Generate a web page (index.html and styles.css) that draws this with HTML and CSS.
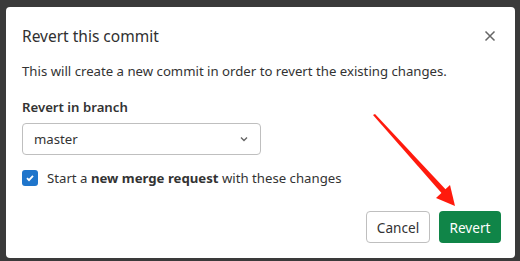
FILE: index.html
```html
<!DOCTYPE html>
<html>
<head>
<title>Revert this commit</title>
<link rel="stylesheet" href="styles.css">
</head>
<body>
<div class="backdrop">
    <div class="modal">
        <div class="modal-header">
            <h4 class="modal-title">Revert this commit</h4>
            <span class="close">
                <svg width="16" height="16" viewBox="0 0 16 16"><path d="M3.5 3.5l9 9M12.5 3.5l-9 9" stroke="#666" stroke-width="1.5" fill="none"/></svg>
            </span>
        </div>
        <div class="modal-body">
            <p class="intro">This will create a new commit in order to revert the existing changes.</p>
            <div class="label">Revert in branch</div>
            <div class="select">
                <span>master</span>
                <svg width="12" height="12" viewBox="0 0 12 12"><path d="M3 4.5l3 3 3-3" stroke="#666" stroke-width="1.4" fill="none"/></svg>
            </div>
            <div class="check-row">
                <span class="checkbox">
                    <svg width="10" height="10" viewBox="0 0 10 10"><path d="M2 5.2l2 2 4-4.4" stroke="#fff" stroke-width="1.8" fill="none"/></svg>
                </span>
                <span>Start a <b>new merge request</b> with these changes</span>
            </div>
        </div>
        <div class="modal-footer">
            <div class="btn btn-cancel">Cancel</div>
            <div class="btn btn-revert">Revert</div>
        </div>
    </div>
    <svg class="arrow" width="520" height="261" viewBox="0 0 520 261">
        <polygon points="373,115 375,114 449,193 445,197" fill="#ff1a0d"/>
        <polygon points="455,206 436,198 450,185" fill="#ff1a0d"/>
    </svg>
</div>
</body>
</html>
```

FILE: styles.css
```css
html, body {
    margin: 0;
    width: 100%;
    height: 100%;
    background-color: #3a3a3a;
    font-family: "Segoe UI", "Noto Sans", sans-serif;
    color: #333;
}
.backdrop {
    position: relative;
    padding: 7px 5px 3px 6px;
}
.modal {
    width: 509px;
    height: 251px;
    background-color: #fff;
    border-radius: 4px;
    display: flex;
    flex-direction: column;
}
.modal-header {
    display: flex;
    align-items: center;
    justify-content: space-between;
    padding: 18px 17px 14px 16px;
}
.modal-title {
    margin: 0;
    font-size: 15.5px;
    line-height: 22px;
    font-weight: 400;
    color: #303030;
}
.close {
    display: flex;
}
.modal-body {
    padding: 0 16px;
    font-size: 13.2px;
    line-height: 20px;
}
.intro {
    margin: 0 0 16px;
}
.label {
    font-weight: 600;
    margin-bottom: 6px;
}
.select {
    width: 216px;
    height: 30px;
    border: 1px solid #bfbfbf;
    border-radius: 4px;
    display: flex;
    align-items: center;
    justify-content: space-between;
    padding: 0 10px 0 11px;
}
.check-row {
    display: flex;
    align-items: center;
    gap: 9px;
    margin-top: 13px;
}
.checkbox {
    width: 16px;
    height: 16px;
    border-radius: 3px;
    background-color: #1f75cb;
    display: flex;
    align-items: center;
    justify-content: center;
}
.modal-footer {
    margin-top: auto;
    display: flex;
    justify-content: flex-end;
    gap: 9px;
    padding: 0 14px 15px;
}
.btn {
    height: 32px;
    box-sizing: border-box;
    border-radius: 4px;
    font-size: 13.6px;
    display: flex;
    align-items: center;
    justify-content: center;
}
.btn-cancel {
    width: 64px;
    border: 1px solid #bfbfbf;
    color: #333;
}
.btn-revert {
    width: 62px;
    background-color: #108548;
    color: #fff;
}
.arrow {
    position: absolute;
    left: 0;
    top: 0;
}
```
